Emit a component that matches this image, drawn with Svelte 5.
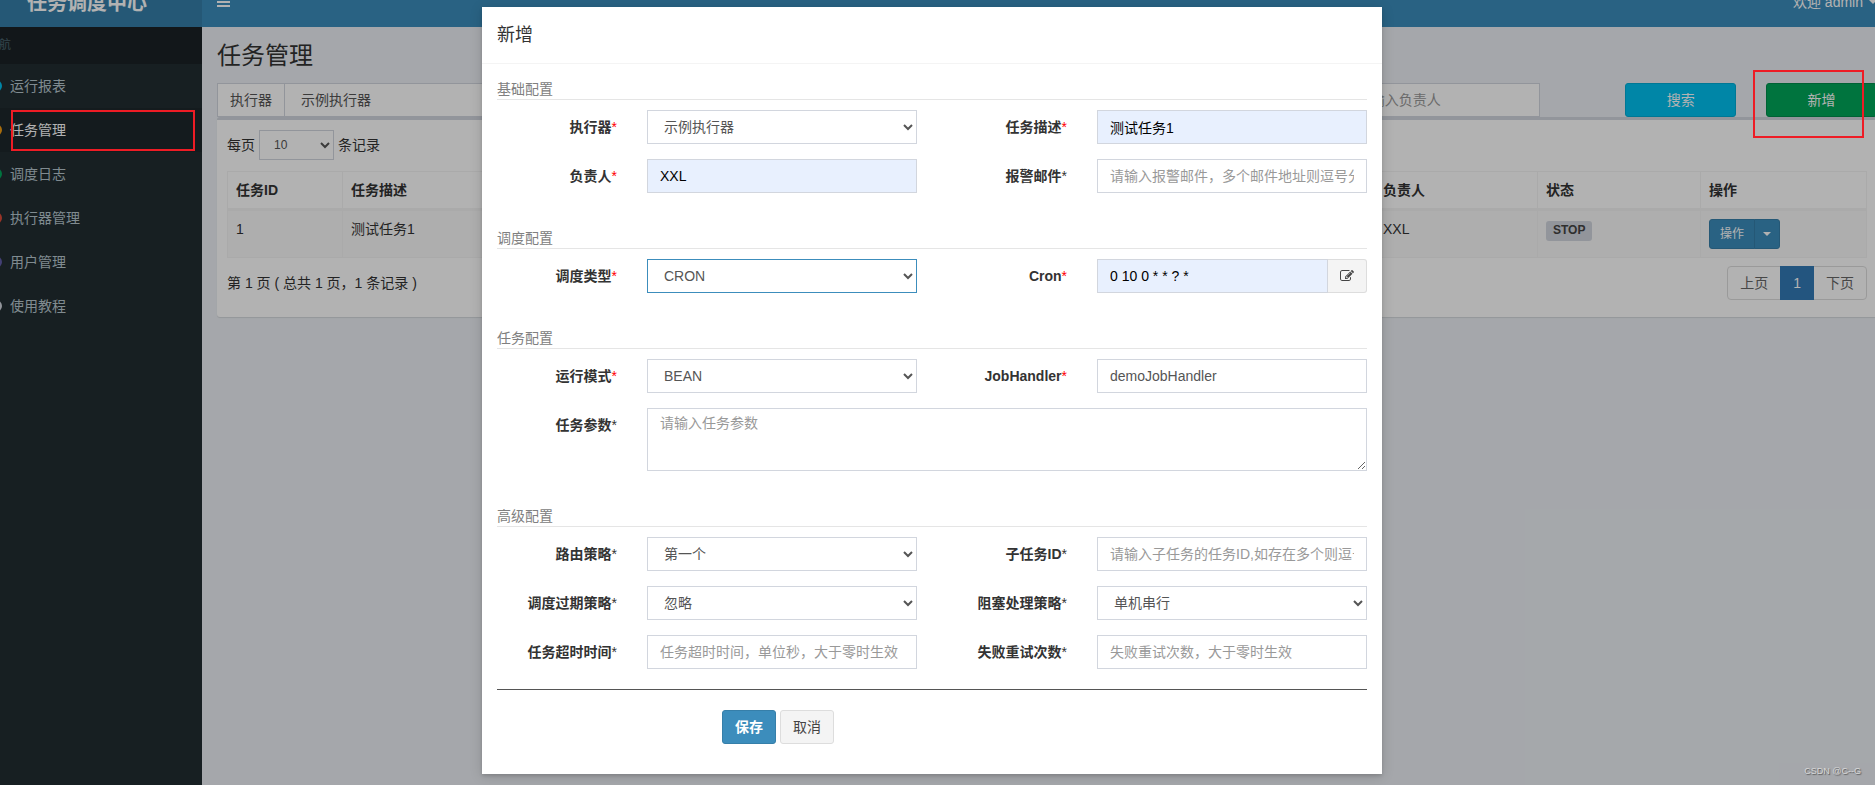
<script lang="ts">
  const menu = [
    { label: '运行报表', color: '#00c0ef', active: false },
    { label: '任务管理', color: '#f39c12', active: true },
    { label: '调度日志', color: '#00a65a', active: false },
    { label: '执行器管理', color: '#dd4b39', active: false },
    { label: '用户管理', color: '#605ca8', active: false },
    { label: '使用教程', color: '#d2d6de', active: false }
  ];

  type Field = {
    id: string;
    label: string;
    kind: 'select' | 'text' | 'cron' | 'area';
    required?: boolean;
    value?: string;
    hint?: string;
    filled?: boolean;
    focused?: boolean;
  };

  const sections: { title: string; fields: Field[] }[] = [
    {
      title: '基础配置',
      fields: [
        { id: 'group', label: '执行器', kind: 'select', required: true, value: '示例执行器' },
        { id: 'desc', label: '任务描述', kind: 'text', required: true, value: '测试任务1', filled: true },
        { id: 'author', label: '负责人', kind: 'text', required: true, value: 'XXL', filled: true },
        { id: 'email', label: '报警邮件', kind: 'text', hint: '请输入报警邮件，多个邮件地址则逗号分隔' }
      ]
    },
    {
      title: '调度配置',
      fields: [
        { id: 'schedule', label: '调度类型', kind: 'select', required: true, value: 'CRON', focused: true },
        { id: 'cron', label: 'Cron', kind: 'cron', required: true, value: '0 10 0 * * ? *', filled: true }
      ]
    },
    {
      title: '任务配置',
      fields: [
        { id: 'mode', label: '运行模式', kind: 'select', required: true, value: 'BEAN' },
        { id: 'handler', label: 'JobHandler', kind: 'text', required: true, value: 'demoJobHandler' },
        { id: 'param', label: '任务参数', kind: 'area', hint: '请输入任务参数' }
      ]
    },
    {
      title: '高级配置',
      fields: [
        { id: 'route', label: '路由策略', kind: 'select', value: '第一个' },
        { id: 'child', label: '子任务ID', kind: 'text', hint: '请输入子任务的任务ID,如存在多个则逗号分隔' },
        { id: 'misfire', label: '调度过期策略', kind: 'select', value: '忽略' },
        { id: 'block', label: '阻塞处理策略', kind: 'select', value: '单机串行' },
        { id: 'timeout', label: '任务超时时间', kind: 'text', hint: '任务超时时间，单位秒，大于零时生效' },
        { id: 'retry', label: '失败重试次数', kind: 'text', hint: '失败重试次数，大于零时生效' }
      ]
    }
  ];
</script>

<div class="viewport">
  <div class="shell">
    <header class="topbar">
      <a class="logo" href="#home">任务调度中心</a>
      <nav class="navbar">
        <button class="toggle" aria-label="菜单">
          <svg width="13" height="14" viewBox="0 0 13 14"><path fill="#fff" d="M0 2h13v2H0zM0 6h13v2H0zM0 10h13v2H0z" /></svg>
        </button>
        <a class="user" href="#user">欢迎 admin <span class="caret"></span></a>
      </nav>
    </header>

    <div class="columns">
      <aside class="sidebar">
        <ul>
          <li class="menu-head">导航</li>
          {#each menu as item}
            <li>
              <a href="#menu" class:active={item.active}>
                <svg width="20" height="12" viewBox="0 0 20 12"><circle cx="6" cy="6" r="5" fill="none" stroke={item.color} stroke-width="2" /></svg>
                <span>{item.label}</span>
              </a>
            </li>
          {/each}
        </ul>
        <div class="mark mark-menu"></div>
      </aside>

      <main>
        <h1>任务管理</h1>
        <div class="filters">
          <div class="group executor">
            <label class="addon" for="f-group">执行器</label>
            <select id="f-group" class="control"><option>示例执行器</option></select>
          </div>
          <input class="control person" aria-label="负责人" placeholder="请输入负责人" />
          <button class="btn info">搜索</button>
          <div class="add">
            <button class="btn success">新增</button>
            <div class="mark mark-add"></div>
          </div>
        </div>

        <section class="box">
          <div class="length">
            <label for="f-len">每页</label>
            <select id="f-len" class="control small"><option>10</option></select>
            <span>条记录</span>
          </div>
          <table>
            <colgroup>
              <col class="c-id" /><col class="c-desc" /><col /><col /><col class="c-s" /><col class="c-s" /><col class="c-op" />
            </colgroup>
            <thead>
              <tr><th>任务ID</th><th>任务描述</th><th>调度类型</th><th>运行模式</th><th>负责人</th><th>状态</th><th>操作</th></tr>
            </thead>
            <tbody>
              <tr>
                <td>1</td><td>测试任务1</td><td>CRON</td><td>BEAN</td><td>XXL</td>
                <td><span class="badge">STOP</span></td>
                <td>
                  <div class="split">
                    <button class="act">操作</button>
                    <button class="act drop" aria-label="更多"><span class="caret"></span></button>
                  </div>
                </td>
              </tr>
            </tbody>
          </table>
          <div class="foot">
            <span class="summary">第 1 页 ( 总共 1 页，1 条记录 )</span>
            <nav class="pages">
              <a href="#prev">上页</a><a href="#1" class="current">1</a><a href="#next">下页</a>
            </nav>
          </div>
        </section>
      </main>
    </div>

    <div class="overlay">
      <div class="modal" role="dialog" aria-labelledby="m-title">
        <h4 id="m-title">新增</h4>
        <form>
          {#each sections as s}
            <section class="part">
              <p>{s.title}</p>
              <div class="fields">
                {#each s.fields as f}
                  <label for={f.id}>{f.label}<span class="star" class:req={f.required}>*</span></label>
                  <div class="cell" class:wide={f.kind === 'area'}>
                    {#if f.kind === 'select'}
                      <select id={f.id} class="control" class:focused={f.focused}><option>{f.value}</option></select>
                    {:else if f.kind === 'area'}
                      <textarea id={f.id} class="control" placeholder={f.hint}></textarea>
                    {:else if f.kind === 'cron'}
                      <div class="group">
                        <input id={f.id} class="control filled" value={f.value} />
                        <button type="button" class="edit" aria-label="编辑">
                          <svg width="14" height="14" viewBox="0 0 1792 1792"><path fill="#444" d="M888 1184l116-116-152-152-116 116v56h96v96h56zm440-720q-16-16-33 1l-350 350q-17 17-1 33t33-1l350-350q17-17 1-33zm80 594v190q0 119-84.500 203.500t-203.500 84.500h-832q-119 0-203.500-84.500t-84.500-203.500v-832q0-119 84.500-203.500t203.500-84.500h832q63 0 117 25 15 7 18 23 3 17-9 29l-49 49q-14 14-32 8-23-6-45-6h-832q-66 0-113 47t-47 113v832q0 66 47 113t113 47h832q66 0 113-47t47-113v-126q0-13 9-22l64-64q15-15 35-7t20 29zm-96-738l288 288-672 672h-288v-288zm444 132l-92 92-288-288 92-92q28-28 68-28t68 28l152 152q28 28 28 68t-28 68z" /></svg>
                        </button>
                      </div>
                    {:else}
                      <input id={f.id} class="control" class:filled={f.filled} value={f.value ?? ''} placeholder={f.hint} />
                    {/if}
                  </div>
                {/each}
              </div>
            </section>
          {/each}
          <hr />
          <div class="actions">
            <button type="button" class="btn primary">保存</button>
            <button type="button" class="btn plain">取消</button>
          </div>
        </form>
      </div>
    </div>
  </div>
  <div class="credit">CSDN @C--G</div>
</div>

<style>
  :global(body) { margin: 0; }
  .viewport, .viewport * { box-sizing: border-box; }
  .viewport {
    position: relative;
    min-height: 100vh;
    overflow: hidden;
    font: 14px/20px "Liberation Sans", "Noto Sans CJK SC", sans-serif;
    color: #333;
  }
  /* The application frame runs past the window on the top, left and right. */
  .shell {
    position: relative;
    display: flex;
    flex-direction: column;
    min-height: calc(100vh + 23px);
    margin: -23px -17px 0 -28px;
    background: #ecf0f5;
  }
  a { text-decoration: none; color: inherit; }
  button, input, select, textarea { font: inherit; margin: 0; }

  .topbar { display: flex; height: 50px; color: #fff; }
  .logo { width: 230px; background: #367fa9; font-size: 20px; font-weight: 700; line-height: 52px; text-align: center; }
  .navbar { flex: 1; display: flex; justify-content: space-between; align-items: center; padding: 0 15px; background: #3c8dbc; }
  .toggle { display: flex; padding: 0; border: 0; background: none; }
  .user { display: flex; align-items: center; gap: 6px; }
  .caret { width: 0; height: 0; border: 4px solid transparent; border-top-color: #fff; border-bottom: 0; }

  .columns { flex: 1; display: flex; }
  .sidebar { position: relative; width: 230px; background: #222d32; }
  .sidebar ul { list-style: none; margin: 0; padding: 0; }
  .menu-head { padding: 10px 15px; font-size: 12px; line-height: 17px; color: #4b646f; background: #1a2226; }
  .sidebar a { display: flex; align-items: center; height: 44px; padding-left: 18px; color: #b8c7ce; }
  .sidebar a.active { color: #fff; background: #1e282c; }

  main { flex: 1; min-width: 0; padding: 15px; }
  h1 { margin: 0 0 13px; font-size: 24px; font-weight: 400; line-height: 28px; }
  .filters { display: grid; grid-template-columns: repeat(12, minmax(0, 1fr)); column-gap: 30px; }
  .executor { grid-column: span 3; }
  .person { grid-column: 9 / span 2; max-width: 196px; }
  .group { display: flex; }
  .group .control { flex: 1; min-width: 0; }
  .addon { padding: 6px 12px; border: 1px solid #d2d6de; border-right: 0; background: #fff; color: #555; }
  .control {
    display: block;
    width: 100%;
    height: 34px;
    padding: 6px 12px;
    border: 1px solid #d2d6de;
    border-radius: 0;
    outline: 0;
    background: #fff;
    color: #555;
  }
  .control::placeholder { color: #999; opacity: 1; }
  .control.filled { background: #e8f0fe; color: #000; }
  .control.focused { border-color: #3c8dbc; }
  .control.small { width: 75px; height: 30px; padding: 5px 10px; font-size: 12px; }
  .btn { height: 34px; padding: 6px 12px; border: 1px solid; border-radius: 3px; line-height: 20px; }
  .info { background: #00c0ef; border-color: #00acd6; color: #fff; }
  .success { width: 100%; background: #00a65a; border-color: #008d4c; color: #fff; }
  .primary { background: #3c8dbc; border-color: #367fa9; color: #fff; font-weight: 700; }
  .plain { background: #f4f4f4; border-color: #ddd; color: #444; }
  .add { position: relative; }

  .box {
    padding: 10px 10px 17px;
    border-top: 3px solid #d2d6de;
    border-radius: 3px;
    background: #fff;
    box-shadow: 0 1px 1px rgba(0, 0, 0, 0.1);
  }
  .length { display: flex; align-items: center; gap: 4px; margin-bottom: 11px; }
  table { width: 100%; table-layout: fixed; border: 1px solid #f4f4f4; border-collapse: separate; border-spacing: 0; }
  .c-id { width: 115px; }
  .c-desc { width: 350px; }
  .c-s { width: 163px; }
  .c-op { width: 165px; }
  th, td { padding: 8px; text-align: left; vertical-align: top; border-right: 1px solid #f4f4f4; }
  th { border-bottom: 2px solid #f4f4f4; }
  td { border-top: 1px solid #f4f4f4; background: #f9f9f9; }
  th:last-child, td:last-child { border-right: 0; }
  .badge { display: block; width: max-content; margin-top: 2px; padding: 0 7px 2px; border-radius: 3px; background: #d2d6de; color: #444; font-size: 12px; font-weight: 700; line-height: 18px; }
  .split { display: flex; }
  .act { height: 30px; padding: 4px 10px; border: 1px solid #367fa9; border-radius: 3px 0 0 3px; background: #3c8dbc; color: #fff; font-size: 12px; }
  .drop { margin-left: -1px; padding: 0 8px; border-radius: 0 3px 3px 0; display: flex; align-items: center; }
  .foot { display: flex; justify-content: space-between; align-items: center; margin-top: 8px; }
  .pages { display: flex; }
  .pages a { padding: 6px 12px; border: 1px solid #ddd; background: #fff; color: #666; }
  .pages a + a { margin-left: -1px; }
  .pages a:first-child { border-radius: 4px 0 0 4px; }
  .pages a:last-child { border-radius: 0 4px 4px 0; }
  .pages .current { position: relative; background: #337ab7; border-color: #337ab7; color: #fff; }

  .overlay { position: absolute; inset: 0; z-index: 2; background: rgba(0, 0, 0, 0.3); }
  .modal { max-width: 900px; margin: 30px auto 0; background: #fff; box-shadow: 0 2px 3px rgba(0, 0, 0, 0.125), 0 2px 12px rgba(0, 0, 0, 0.15); }
  h4 { margin: 0; padding: 15px; border-bottom: 1px solid #f4f4f4; font-size: 18px; font-weight: 400; line-height: 26px; }
  form { padding: 15px 15px 30px; }
  .part + .part { margin-top: 35px; }
  .part p { margin: 0 0 10px; border-bottom: 1px solid #e5e5e5; color: gray; }
  .fields { display: grid; grid-template-columns: 2fr 4fr 2fr 4fr; row-gap: 15px; margin: 0 -15px; }
  .fields label { padding: 7px 15px 0; text-align: right; font-weight: 700; }
  .star { font-weight: 400; }
  .req { color: red; }
  .cell { min-width: 0; padding: 0 15px; }
  .wide { grid-column: span 3; }
  textarea.control { height: 63px; padding-top: 5px; line-height: 18px; resize: both; }
  .edit { display: flex; align-items: center; padding: 0 12px; border: 1px solid #ddd; border-left: 0; border-radius: 0 3px 3px 0; background: #f4f4f4; }
  hr { height: 1px; margin: 20px 0; border: 0; background: #555; }
  .actions { display: flex; gap: 4px; padding-left: 225px; }

  .mark { position: absolute; z-index: 3; border: 2px solid #ee1c25; }
  .mark-menu { top: 83px; left: 39px; width: 184px; height: 41px; }
  .mark-add { top: -13px; left: -13px; width: 111px; height: 68px; }
  .credit { position: absolute; z-index: 4; right: 14px; bottom: 4px; font-size: 9px; line-height: 20px; color: #d8d8d8; text-shadow: 1px 1px 1px #555; }
</style>
